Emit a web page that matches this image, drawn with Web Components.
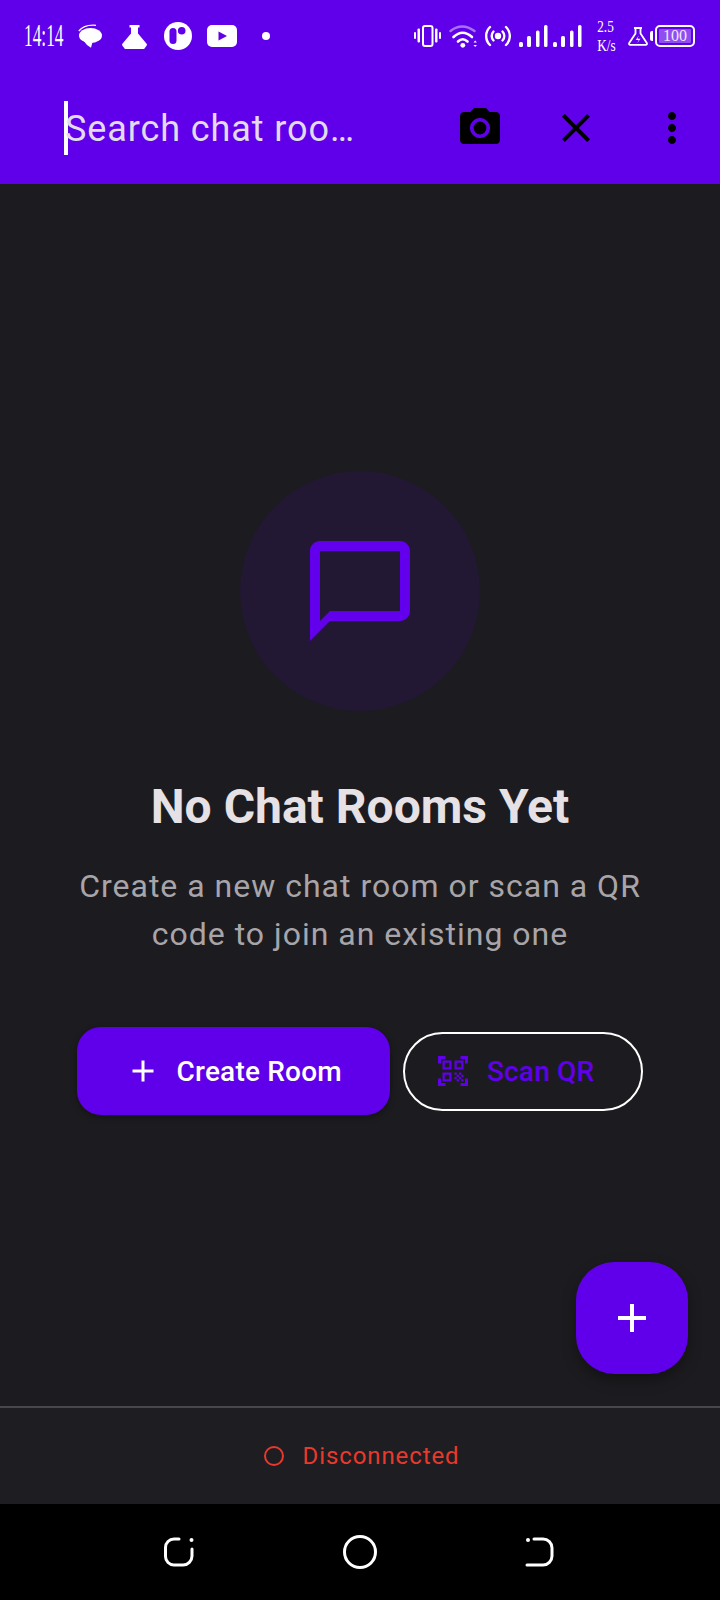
<!DOCTYPE html>
<html lang="en">
<head>
<meta charset="utf-8">
<title>Chat Rooms</title>
<style>
  html, body { margin: 0; padding: 0; background: #000; }
  body { font-family: Roboto, "Liberation Sans", sans-serif; }
</style>
</head>
<body>
<chat-screen>
  <status-bar slot="top"></status-bar>
  <search-bar slot="top" placeholder="Search chat roo…"></search-bar>
  <empty-rooms title-text="No Chat Rooms Yet">
    Create a new chat room or scan a QR<br>code to join an existing one
  </empty-rooms>
  <room-fab slot="overlay"></room-fab>
  <connection-bar slot="bottom">Disconnected</connection-bar>
  <nav-bar slot="bottom"></nav-bar>
</chat-screen>

<script>
class ChatScreen extends HTMLElement {
  constructor() {
    super();
    this.shadowDOM = this.attachShadow({ mode: "open" });
  }

  connectedCallback() {
    this.render();
  }

  render() {
    this.shadowDOM.innerHTML = /* html */ `
      <style>
        :host {
          display: flex;
          flex-direction: column;
          width: 720px;
          height: 1600px;
          overflow: hidden;
          background: #1c1b1f;
        }
        main {
          position: relative;
          flex: 1;
          display: flex;
          flex-direction: column;
          min-height: 0;
        }
      </style>
      <slot name="top"></slot>
      <main>
        <slot></slot>
        <slot name="overlay"></slot>
      </main>
      <slot name="bottom"></slot>
    `;
  }
}

class StatusBar extends HTMLElement {
  constructor() {
    super();
    this.shadowDOM = this.attachShadow({ mode: "open" });
  }

  connectedCallback() {
    this.render();
  }

  render() {
    this.shadowDOM.innerHTML = /* html */ `
      <style>
        :host {
          display: flex;
          justify-content: space-between;
          align-items: center;
          height: 72px;
          padding: 0 25px 0 24px;
          background: #6000ea;
          color: #fff;
          font-family: "Liberation Serif", serif;
        }
        .left, .right { display: flex; align-items: center; }
        .right { gap: 8px; }
        .time {
          width: 44px;
          font-size: 31px;
          line-height: 30px;
          white-space: nowrap;
          transform: scaleX(0.56);
          transform-origin: left center;
        }
        .slot { width: 44px; display: flex; justify-content: center; }
        svg { display: block; }
        .speed {
          width: 20px;
          margin: 0 5px;
          font-size: 17px;
          line-height: 19px;
          text-align: center;
          white-space: nowrap;
        }
        .speed span { display: block; transform: scaleX(0.78); }
        .battery-group { display: flex; align-items: center; gap: 2px; margin-left: -6px; }
        .nub { width: 3px; height: 10px; background: #fff; border-radius: 2px 0 0 2px; }
        .battery {
          box-sizing: border-box;
          width: 40px;
          height: 22px;
          padding: 2px;
          border: 2px solid #fff;
          border-radius: 5px;
        }
        .level {
          height: 14px;
          background: rgba(255, 255, 255, 0.3);
          font-size: 16px;
          line-height: 14px;
          text-align: center;
          color: #f1e8ff;
          border-radius: 1px;
        }
      </style>
      <div class="left">
        <div class="time">14:14</div>
        <div class="slot">
          <svg width="24" height="24" viewBox="0 0 24 24" fill="#fff">
            <path d="M.8 7Q6 .4 18 1.300" fill="none" stroke="#fff" stroke-width="1.300"/>
            <ellipse cx="12.500" cy="11.500" rx="11.500" ry="7.500"/>
            <path d="M5 16l7 2.500 2.500-.5-1.500 5.800L9 21z"/>
          </svg>
        </div>
        <div class="slot">
          <svg width="25" height="25" viewBox="0 0 25 25" fill="#fff">
            <path d="M7.500 1h10v2.400H16v6l8.600 10.400q.7 1-.1 2l-2 2.600q-.4.6-1.200.6H3.700q-.8 0-1.200-.6l-2-2.600q-.8-1-.1-2L9 9.400v-6H7.500z"/>
          </svg>
        </div>
        <div class="slot">
          <svg width="28" height="28" viewBox="0 0 28 28">
            <circle cx="14" cy="14" r="14" fill="#fff"/>
            <rect x="5.500" y="6" width="7" height="16" rx="3.500" fill="#6000ea"/>
            <circle cx="17.700" cy="8.700" r="3.800" fill="#6000ea"/>
          </svg>
        </div>
        <div class="slot">
          <svg width="30" height="22" viewBox="0 0 30 22">
            <rect width="30" height="22" rx="5" fill="#fff"/>
            <path d="M11.500 6.500L20 11l-8.500 4.500z" fill="#6000ea"/>
          </svg>
        </div>
        <div class="slot">
          <svg width="8" height="8" viewBox="0 0 8 8"><circle cx="4" cy="4" r="4" fill="#fff"/></svg>
        </div>
      </div>
      <div class="right">
        <svg width="27" height="22" viewBox="0 0 27 22" fill="#fff">
          <rect x="9" y="1" width="9.500" height="20" rx="2" fill="none" stroke="#fff" stroke-width="2"/>
          <rect x="0" y="7" width="2" height="7" rx="1"/>
          <rect x="3.500" y="3.500" width="2.500" height="14" rx="1"/>
          <rect x="21" y="3.500" width="2.500" height="14" rx="1"/>
          <rect x="25" y="7" width="2" height="7" rx="1"/>
        </svg>
        <svg width="28" height="23" viewBox="0 0 28 23" fill="none" stroke="#fff" stroke-linecap="round">
          <path d="M1.500 6Q13 -3 25.500 6" stroke-width="2.400" opacity=".45"/>
          <path d="M4.500 12Q13.500 3.500 23 12" stroke-width="2.600"/>
          <path d="M9 16.500Q13.700 12 18.500 16.500" stroke-width="2.600"/>
          <circle cx="13.800" cy="20.300" r="2.400" fill="#fff" stroke="none"/>
          <path d="M24.500 17.500l1.700-2 1.700 2zM24.500 20l1.700 2 1.700-2z" fill="#fff" stroke="none"/>
        </svg>
        <svg width="26" height="22" viewBox="0 0 26 22" fill="none" stroke="#fff" stroke-width="2.400" stroke-linecap="round">
          <circle cx="13" cy="11" r="3.200" fill="#fff" stroke="none"/>
          <path d="M8.500 6.500a6.500 6.500 0 0 0 0 9M17.500 6.500a6.500 6.500 0 0 1 0 9"/>
          <path d="M5 2a12.500 12.500 0 0 0 0 18M21 2a12.500 12.500 0 0 1 0 18"/>
        </svg>
        <svg width="63" height="22" viewBox="0 0 63 22" fill="#fff">
          <rect x="0" y="17" width="4" height="5" rx="1.500"/>
          <rect x="8" y="11" width="4" height="11" rx="1.500"/>
          <rect x="17" y="5.500" width="3.500" height="16.500" rx="1.500"/>
          <rect x="25" y="0" width="3.500" height="22" rx="1.500"/>
          <rect x="34" y="17" width="4" height="5" rx="1.500"/>
          <rect x="42" y="11" width="4" height="11" rx="1.500"/>
          <rect x="51" y="5.500" width="3.500" height="16.500" rx="1.500"/>
          <rect x="59" y="0" width="3.500" height="22" rx="1.500"/>
        </svg>
        <div class="speed"><span>2.5</span><span>K/s</span></div>
        <svg width="20" height="19" viewBox="0 0 20 19" fill="none" stroke="#fff" stroke-width="1.800" stroke-linejoin="round">
          <path d="M6 1h8M7.500 1v5.500L1.200 16q-.6 1.800 1 1.800h15.600q1.600 0 1-1.800L12.500 6.500V1"/>
          <path d="M10.800 8.500l-3 4.500h3l-1.600 3.200 3.300-4.500h-3z" fill="#fff" stroke="none"/>
        </svg>
        <div class="battery-group">
          <div class="nub"></div>
          <div class="battery"><div class="level">100</div></div>
        </div>
      </div>
    `;
  }
}

class SearchBar extends HTMLElement {
  constructor() {
    super();
    this.shadowDOM = this.attachShadow({ mode: "open" });
  }

  connectedCallback() {
    this.render();
  }

  render() {
    const placeholder = this.getAttribute("placeholder");
    this.shadowDOM.innerHTML = /* html */ `
      <style>
        :host {
          display: flex;
          align-items: center;
          height: 112px;
          padding-left: 64px;
          background: #6000ea;
        }
        .field {
          flex: 1;
          display: flex;
          align-items: center;
          min-width: 0;
        }
        .caret {
          flex: none;
          width: 4px;
          height: 54px;
          margin-right: -3px;
          background: #fff;
        }
        .hint {
          padding-top: 2px;
          font-size: 36px;
          letter-spacing: 0.9px;
          color: #e2dcea;
          white-space: nowrap;
        }
        .action {
          flex: none;
          width: 96px;
          height: 96px;
          display: flex;
          align-items: center;
          justify-content: center;
        }
        svg { display: block; width: 48px; height: 48px; fill: #000; }
      </style>
      <div class="field">
        <div class="caret"></div>
        <div class="hint">${placeholder}</div>
      </div>
      <div class="action">
        <svg viewBox="0 0 24 24">
          <circle cx="12" cy="12" r="3.200"/>
          <path d="M9 2L7.170 4H4c-1.100 0-2 .9-2 2v12c0 1.100.9 2 2 2h16c1.100 0 2-.9 2-2V6c0-1.100-.9-2-2-2h-3.170L15 2H9zm3 15c-2.760 0-5-2.240-5-5s2.240-5 5-5 5 2.240 5 5-2.240 5-5 5z"/>
        </svg>
      </div>
      <div class="action">
        <svg viewBox="0 0 24 24">
          <path d="M19 6.410L17.590 5 12 10.590 6.410 5 5 6.410 10.590 12 5 17.590 6.410 19 12 13.410 17.590 19 19 17.590 13.410 12z"/>
        </svg>
      </div>
      <div class="action">
        <svg viewBox="0 0 24 24">
          <path d="M12 8c1.100 0 2-.9 2-2s-.9-2-2-2-2 .9-2 2 .9 2 2 2zm0 2c-1.100 0-2 .9-2 2s.9 2 2 2 2-.9 2-2-.9-2-2-2zm0 6c-1.100 0-2 .9-2 2s.9 2 2 2 2-.9 2-2-.9-2-2-2z"/>
        </svg>
      </div>
    `;
  }
}

class EmptyRooms extends HTMLElement {
  constructor() {
    super();
    this.shadowDOM = this.attachShadow({ mode: "open" });
  }

  connectedCallback() {
    this.render();
  }

  render() {
    const title = this.getAttribute("title-text");
    this.shadowDOM.innerHTML = /* html */ `
      <style>
        :host {
          flex: 1;
          display: flex;
          flex-direction: column;
          align-items: center;
          justify-content: center;
          padding-bottom: 4px;
          text-align: center;
        }
        .disc {
          width: 240px;
          height: 240px;
          border-radius: 50%;
          background: #231834;
          display: flex;
          align-items: center;
          justify-content: center;
        }
        .disc svg { display: block; width: 120px; height: 120px; fill: #6200ee; }
        h2 {
          margin: 64px 0 0;
          font-size: 48px;
          line-height: 64px;
          font-weight: 700;
          color: #e6e1e5;
        }
        p {
          margin: 23px 0 0;
          font-size: 32px;
          line-height: 48px;
          letter-spacing: 1px;
          color: #a8a5aa;
        }
        .actions {
          display: flex;
          align-items: center;
          gap: 13px;
          margin-top: 69px;
        }
      </style>
      <div class="disc">
        <svg viewBox="0 0 24 24">
          <path d="M20 2H4c-1.100 0-2 .9-2 2v18l4-4h14c1.100 0 2-.9 2-2V4c0-1.100-.9-2-2-2zm0 14H6l-2 2V4h16v12z"/>
        </svg>
      </div>
      <h2>${title}</h2>
      <p><slot></slot></p>
      <div class="actions">
        <action-button kind="filled" label="Create Room">
          <svg width="36" height="36" viewBox="0 0 24 24" fill="#fff" style="display:block">
            <path d="M19 13h-6v6h-2v-6H5v-2h6V5h2v6h6v2z"/>
          </svg>
        </action-button>
        <action-button kind="outlined" label="Scan QR">
          <svg width="36" height="36" viewBox="0 0 24 24" fill="#6000ea" style="display:block">
            <path d="M9.500 6.500v3h-3v-3h3M11 5H5v6h6V5zm-1.500 9.500v3h-3v-3h3M11 13H5v6h6v-6zm6.500-6.500v3h-3v-3h3M19 5h-6v6h6V5zm-6 8h1.500v1.500H13V13zm1.500 1.500H16V16h-1.500v-1.500zM16 13h1.500v1.500H16V13zm-3 3h1.500v1.500H13V16zm1.500 1.500H16V19h-1.500v-1.500zM16 16h1.500v1.500H16V16zm1.500-1.500H19V16h-1.500v-1.500zm0 3H19V19h-1.500v-1.500zM22 7h-2V4h-3V2h5v5zm0 15v-5h-2v3h-3v2h5zM2 22h5v-2H4v-3H2v5zM2 2v5h2V4h3V2H2z"/>
          </svg>
        </action-button>
      </div>
    `;
  }
}

class ActionButton extends HTMLElement {
  constructor() {
    super();
    this.shadowDOM = this.attachShadow({ mode: "open" });
  }

  connectedCallback() {
    this.render();
  }

  render() {
    const label = this.getAttribute("label");
    this.shadowDOM.innerHTML = /* html */ `
      <style>
        :host {
          display: flex;
          align-items: center;
          gap: 16px;
          box-sizing: border-box;
          font-size: 28px;
          font-weight: 500;
          letter-spacing: 0.2px;
          white-space: nowrap;
        }
        :host([kind="filled"]) {
          height: 88px;
          padding: 0 48px;
          border-radius: 24px;
          background: #6000ea;
          color: #fff;
          box-shadow: 0 2px 6px rgba(0, 0, 0, 0.35);
        }
        :host([kind="outlined"]) {
          height: 79px;
          padding: 0 47px 0 30px;
          border: 2px solid #fff;
          border-radius: 40px;
          color: #6000ea;
        }
      </style>
      <slot></slot>
      <span>${label}</span>
    `;
  }
}

class RoomFab extends HTMLElement {
  constructor() {
    super();
    this.shadowDOM = this.attachShadow({ mode: "open" });
  }

  connectedCallback() {
    this.render();
  }

  render() {
    this.shadowDOM.innerHTML = /* html */ `
      <style>
        :host {
          position: absolute;
          right: 32px;
          bottom: 32px;
          width: 112px;
          height: 112px;
          display: flex;
          align-items: center;
          justify-content: center;
          border-radius: 38px;
          background: #6000ea;
          box-shadow: 0 6px 14px rgba(0, 0, 0, 0.35);
        }
        svg { display: block; width: 48px; height: 48px; fill: #fff; }
      </style>
      <svg viewBox="0 0 24 24"><path d="M19 13h-6v6h-2v-6H5v-2h6V5h2v6h6v2z"/></svg>
    `;
  }
}

class ConnectionBar extends HTMLElement {
  constructor() {
    super();
    this.shadowDOM = this.attachShadow({ mode: "open" });
  }

  connectedCallback() {
    this.render();
  }

  render() {
    this.shadowDOM.innerHTML = /* html */ `
      <style>
        :host {
          display: flex;
          align-items: center;
          justify-content: center;
          gap: 19px;
          height: 98px;
          padding-left: 3px;
          box-sizing: border-box;
          border-top: 2px solid #48474c;
          background: #1e1d22;
          color: #e8392c;
          font-size: 24px;
          letter-spacing: 0.9px;
        }
        .dot {
          box-sizing: border-box;
          width: 20px;
          height: 20px;
          border: 2px solid #e8392c;
          border-radius: 50%;
        }
      </style>
      <div class="dot"></div>
      <span><slot></slot></span>
    `;
  }
}

class NavBar extends HTMLElement {
  constructor() {
    super();
    this.shadowDOM = this.attachShadow({ mode: "open" });
  }

  connectedCallback() {
    this.render();
  }

  render() {
    this.shadowDOM.innerHTML = /* html */ `
      <style>
        :host {
          display: flex;
          align-items: center;
          justify-content: center;
          gap: 148px;
          height: 96px;
          padding-right: 2px;
          background: #000;
        }
        svg { display: block; fill: none; stroke: #fff; stroke-width: 3; stroke-linecap: round; }
      </style>
      <svg width="31" height="30" viewBox="0 0 31 30">
        <path d="M15 2H10a8.500 8.500 0 0 0-8.500 8.500v9A8.500 8.500 0 0 0 10 28h9a9 9 0 0 0 9-9v-7"/>
        <circle cx="27.500" cy="3" r="2" fill="#fff" stroke="none"/>
      </svg>
      <svg width="34" height="34" viewBox="0 0 34 34"><circle cx="17" cy="17" r="15.500"/></svg>
      <svg width="29" height="30" viewBox="0 0 29 30">
        <path d="M9 2h9a9 9 0 0 1 9 9v8a9 9 0 0 1-9 9H2"/>
        <circle cx="3" cy="3" r="2" fill="#fff" stroke="none"/>
      </svg>
    `;
  }
}

customElements.define("chat-screen", ChatScreen);
customElements.define("status-bar", StatusBar);
customElements.define("search-bar", SearchBar);
customElements.define("empty-rooms", EmptyRooms);
customElements.define("action-button", ActionButton);
customElements.define("room-fab", RoomFab);
customElements.define("connection-bar", ConnectionBar);
customElements.define("nav-bar", NavBar);
</script>
</body>
</html>
